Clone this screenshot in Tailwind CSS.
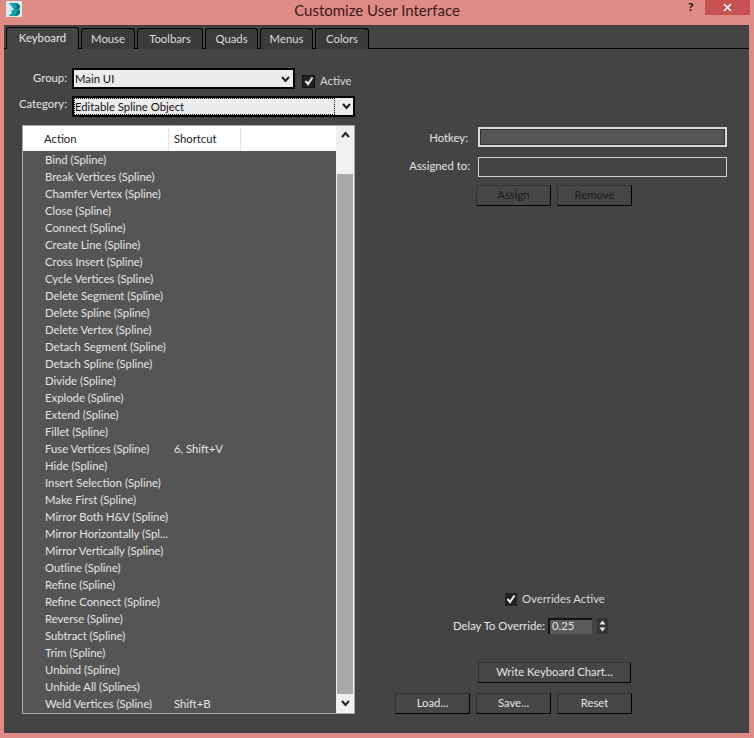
<!doctype html>
<html>
<head>
<meta charset="utf-8">
<script src="https://cdn.jsdelivr.net/npm/@tailwindcss/browser@4"></script>
</head>
<body class="m-0 bg-[#df8b85] overflow-hidden font-['Lato',sans-serif] text-[11.3px] text-[#e4e4e4]">
<div class="w-[754px] h-[738px] flex flex-col">

  <!-- title bar -->
  <div class="relative h-[25px] shrink-0 flex justify-center">
    <svg class="absolute left-[6px] top-[1px]" width="16" height="16" viewBox="0 0 16 16">
      <rect width="16" height="16" fill="#dcecec"/>
      <path d="M3 2 H9 C12 2 14 4 14 6 C14 7 13.5 8 12.5 8.5 C13.5 9 14 10 14 11 C14 13 12 15 9 15 H3 L6 11.5 L5 9.5 L8 8.5 L6 6 Z" fill="#14a3ad"/>
      <path d="M9 2 C12 2 14 4 14 6 C14 7 13.5 8 12.5 8.5 L9 8 L11 6 Z M12.5 8.5 C13.5 9 14 10 14 11 C14 13 12 15 9 15 L11 11 Z" fill="#0b6f7d"/>
    </svg>
    <span class="text-[15px] leading-[20px] text-[#3a1a18]">Customize User Interface</span>
    <span class="absolute left-[688px] top-[1px] font-bold text-[12px] leading-[12px] text-[#111]">?</span>
    <div class="absolute left-[705px] top-0 w-[45px] h-[15px] bg-[#c75050] flex items-center justify-center">
      <svg width="9" height="9" viewBox="0 0 9 9"><path d="M1 1 L8 8 M8 1 L1 8" stroke="#fff" stroke-width="1.6"/></svg>
    </div>
  </div>

  <!-- dialog -->
  <div class="ml-[4px] w-[745px] h-[708px] bg-[#444444] border-t border-[#3a3a3a] flex flex-col">

    <!-- tabs -->
    <div id="tabs" class="h-[23px] pl-[2px] pt-[1px] flex gap-[2px] border-b border-black shrink-0"></div>

    <div class="flex-1 flex">
      <!-- left pane -->
      <div class="w-[351px] shrink-0 flex flex-col">
        <div class="mt-[19px] h-[21px] flex items-center">
          <span class="w-[63px] text-right">Group:</span>
          <div class="ml-[5px] w-[223px] h-[21px] bg-[#ececec] border-2 border-black flex items-center justify-between pl-[1px] pr-[3px] pt-[1px] text-[#111]">
            <span>Main UI</span>
            <svg width="9" height="7" viewBox="0 0 9 7"><path d="M1 1 L4.5 5 L8 1" fill="none" stroke="#222" stroke-width="2"/></svg>
          </div>
          <div class="ml-[7px] mt-[5px] w-[13px] h-[13px] bg-[#222] border border-[#111] flex items-center justify-center">
            <svg width="10" height="10" viewBox="0 0 10 10"><path d="M1.5 5 L4 8 L8.5 1.5" fill="none" stroke="#eee" stroke-width="2"/></svg>
          </div>
          <span class="ml-[5px] mt-[5px] text-[#d8d8d8]">Active</span>
        </div>
        <div class="mt-[7px] h-[21px] flex items-center">
          <span class="w-[63px] text-right -mt-[4px]">Category:</span>
          <div class="ml-[5px] w-[283px] h-[21px] bg-[#ececec] border-2 border-black flex items-center text-[#111]">
            <div class="w-[261px] h-[17px] pt-[1px] border border-dotted border-black flex items-center">Editable Spline Object</div>
            <svg class="ml-[7px]" width="9" height="7" viewBox="0 0 9 7"><path d="M1 1 L4.5 5 L8 1" fill="none" stroke="#222" stroke-width="2"/></svg>
          </div>
        </div>

        <!-- action list -->
        <div class="ml-[18px] mt-[8px] w-[333px] h-[589px] border border-[#a8a8a8] flex">
          <div class="w-[313px] flex flex-col">
            <div class="h-[25px] pt-[1px] bg-white text-[#222] flex items-center shrink-0">
              <span class="w-[146px] h-full flex items-center pl-[21px] border-r border-[#e4e4e4]">Action</span>
              <span class="w-[72px] h-full flex items-center pl-[5px] border-r border-[#e4e4e4]">Shortcut</span>
            </div>
            <div id="rows" class="flex-1 bg-[#555555] pt-[1px]"></div>
          </div>
          <!-- scrollbar -->
          <div class="w-[18px] bg-[#f0f0f0] flex flex-col">
            <div class="h-[23px] flex items-start justify-center pt-[5px]">
              <svg width="9" height="7" viewBox="0 0 9 7"><path d="M1 6 L4.5 2 L8 6" fill="none" stroke="#222" stroke-width="2"/></svg>
            </div>
            <div class="mt-[25px] h-[520px] w-[16px] ml-[1px] bg-[#a8a8a8]"></div>
            <div class="flex-1 flex items-center justify-center">
              <svg width="9" height="7" viewBox="0 0 9 7"><path d="M1 1 L4.5 5 L8 1" fill="none" stroke="#222" stroke-width="2"/></svg>
            </div>
          </div>
        </div>
      </div>

      <!-- right pane -->
      <div class="flex-1 flex flex-col pt-[77px]">
        <div class="h-[21px] flex items-center">
          <span class="w-[113px] text-right pt-[3px]">Hotkey:</span>
          <div class="ml-[10px] w-[249px] h-[20px] bg-[#555555] border-2 border-[#d8d8d8] shadow-[inset_0_0_0_1px_#333]"></div>
        </div>
        <div class="mt-[9px] h-[21px] flex items-center">
          <span class="w-[115px] text-right">Assigned to:</span>
          <div class="ml-[8px] w-[249px] h-[20px] bg-[#444444] border border-[#d0d0d0]"></div>
        </div>
        <div class="mt-[8px] ml-[121px] flex gap-[6px] text-[#1c1c1c]">
          <div class="w-[75px] h-[21px] pb-[1px] bg-[#464646] border border-[#333] border-r-black border-b-black flex items-center justify-center">Assign</div>
          <div class="w-[75px] h-[21px] pb-[1px] bg-[#464646] border border-[#333] border-r-black border-b-black flex items-center justify-center">Remove</div>
        </div>

        <div class="mt-auto ml-[150px] h-[14px] flex items-center">
          <div class="w-[12px] h-[13px] bg-[#222] flex items-center justify-center">
            <svg width="10" height="10" viewBox="0 0 10 10"><path d="M1.5 5 L4 8 L8.5 1.5" fill="none" stroke="#eee" stroke-width="2"/></svg>
          </div>
          <span class="ml-[5px] text-[#d8d8d8]">Overrides Active</span>
        </div>
        <div class="mt-[11px] h-[18px] flex items-center">
          <span class="ml-[98px] w-[91px] whitespace-nowrap">Delay To Override:</span>
          <div class="ml-[4px] w-[44px] h-[16px] bg-[#5a5a5a] border-l-2 border-t-2 border-[#111] pl-[2px] leading-[12px]">0.25</div>
          <div class="ml-[5px] w-[11px] h-[16px] bg-[#333] flex flex-col items-center justify-center gap-[2px]">
            <svg width="7" height="5" viewBox="0 0 7 5"><path d="M0.5 4.5 L3.5 0.5 L6.5 4.5 Z" fill="#e8e8e8"/></svg>
            <svg width="7" height="5" viewBox="0 0 7 5"><path d="M0.5 0.5 L3.5 4.5 L6.5 0.5 Z" fill="#e8e8e8"/></svg>
          </div>
        </div>
        <div class="mt-[27px] ml-[123px] w-[153px] h-[21px] pb-[1px] bg-[#464646] border border-[#333] border-r-black border-b-black flex items-center justify-center">Write Keyboard Chart...</div>
        <div class="mt-[10px] mb-[19px] ml-[40px] flex gap-[6px]">
          <div class="w-[75px] h-[21px] pb-[1px] bg-[#464646] border border-[#333] border-r-black border-b-black flex items-center justify-center">Load...</div>
          <div class="w-[75px] h-[21px] pb-[1px] bg-[#464646] border border-[#333] border-r-black border-b-black flex items-center justify-center">Save...</div>
          <div class="w-[75px] h-[21px] pb-[1px] bg-[#464646] border border-[#333] border-r-black border-b-black flex items-center justify-center">Reset</div>
        </div>
      </div>
    </div>
  </div>
</div>

<script>
  const tabs = [['Keyboard', 73], ['Mouse', 54], ['Toolbars', 66], ['Quads', 53], ['Menus', 53], ['Colors', 54]];
  const tabsDiv = document.getElementById('tabs');
  tabs.forEach(([name, width], i) => {
    const tab = document.createElement('div');
    tab.style.width = width + 'px';
    tab.className = i === 0
      ? 'h-[22px] bg-[#444444] border border-b-0 border-black rounded-t-[3px] flex items-center justify-center text-[#e8e8e8] relative z-10'
      : 'h-[21px] mt-[1px] bg-[#3b3b3b] border border-b-0 border-black rounded-t-[3px] flex items-center justify-center text-[#dcdcdc]';
    tab.textContent = name;
    tabsDiv.appendChild(tab);
  });

  const actions = ['Bind', 'Break Vertices', 'Chamfer Vertex', 'Close', 'Connect', 'Create Line', 'Cross Insert', 'Cycle Vertices', 'Delete Segment', 'Delete Spline', 'Delete Vertex', 'Detach Segment', 'Detach Spline', 'Divide', 'Explode', 'Extend', 'Fillet', 'Fuse Vertices', 'Hide', 'Insert Selection', 'Make First', 'Mirror Both H&V', 'Mirror Horizontally', 'Mirror Vertically', 'Outline', 'Refine', 'Refine Connect', 'Reverse', 'Subtract', 'Trim', 'Unbind', 'Unhide All', 'Weld Vertices'];
  const shortcuts = { 'Fuse Vertices': '6, Shift+V', 'Weld Vertices': 'Shift+B' };
  const rowsDiv = document.getElementById('rows');
  actions.forEach(name => {
    let label = name + ' (Spline)';
    if (name === 'Unhide All') label = 'Unhide All (Splines)';
    if (name === 'Mirror Horizontally') label = 'Mirror Horizontally (Spl...';
    const row = document.createElement('div');
    row.className = 'h-[17px] flex items-center text-[#e4e4e4]';
    row.innerHTML = `<span class="w-[151px] pl-[22px] whitespace-nowrap">${label.replace('&', '&amp;')}</span><span>${shortcuts[name] || ''}</span>`;
    rowsDiv.appendChild(row);
  });
</script>
</body>
</html>
